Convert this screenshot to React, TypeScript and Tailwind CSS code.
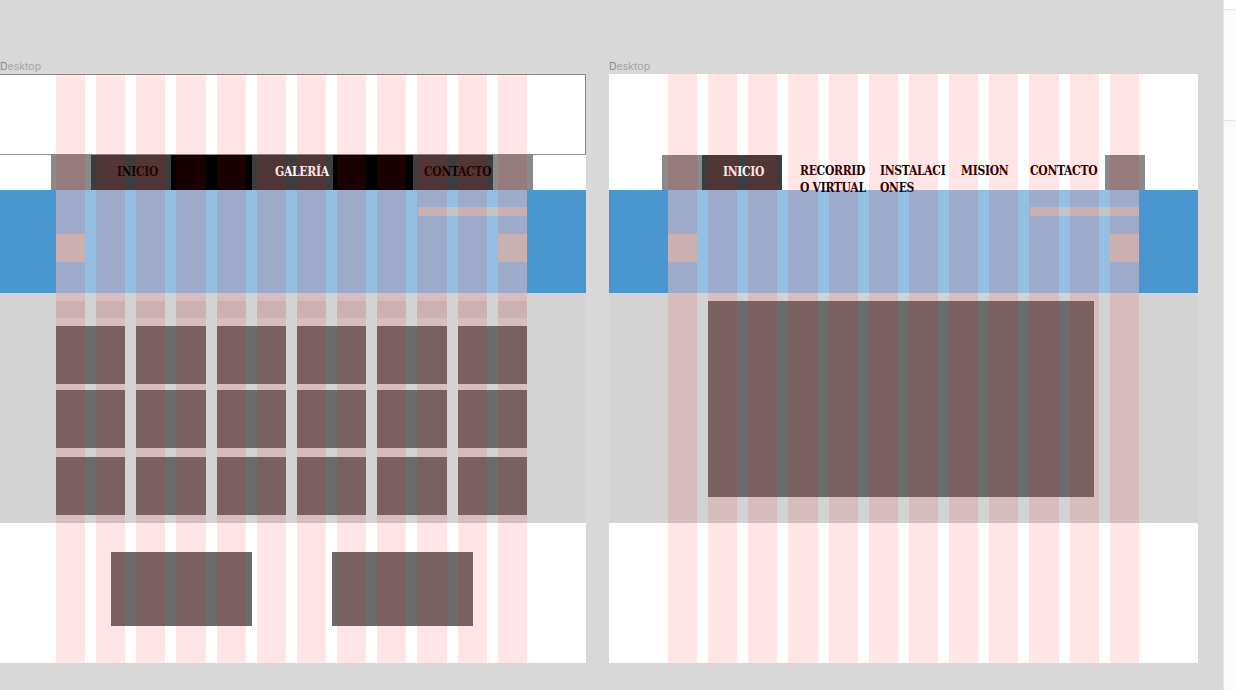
import type { ReactNode } from "react";

const slab = "font-['DejaVu_Serif_Condensed','DejaVu_Serif',serif] font-bold text-[12px] leading-[17px] tracking-[-0.3px] whitespace-nowrap";

function GridOverlay() {
  // 12 column layout grid shown on top of the frame
  return (
    <div className="pointer-events-none absolute inset-0 z-20 grid grid-cols-12 gap-x-[11px] px-[59px]">
      {Array.from({ length: 12 }).map((_, i) => (
        <div key={i} className="h-full bg-[rgba(255,0,0,0.1)]" />
      ))}
    </div>
  );
}

function Frame({ label, children, labelPad = "" }: { label: string; children: ReactNode; labelPad?: string }) {
  return (
    <div className="flex w-[589px] shrink-0 flex-col">
      <div className={`h-[14px] font-['Inter',sans-serif] text-[10.5px] leading-[14px] text-[#a6a6a6] ${labelPad}`}>
        <span className="text-[#8c8c8c]">{label[0]}</span>
        {label.slice(1)}
      </div>
      <div className="relative flex h-[589px] flex-col bg-white">
        {children}
        <GridOverlay />
      </div>
    </div>
  );
}

function Hero() {
  return (
    <div className="h-[103px] bg-[#4a96d0] px-[59px]">
      <div className="flex h-full flex-col bg-[#93bfe3] pt-[17px]">
        <div className="h-[9px] w-[109px] self-end bg-[#c4c4c4]" />
        <div className="mt-[18px] flex justify-between">
          <div className="h-[28px] w-[29px] bg-[#c4c4c4]" />
          <div className="h-[28px] w-[29px] bg-[#c4c4c4]" />
        </div>
      </div>
    </div>
  );
}

function Box({ className = "" }: { className?: string }) {
  return <div className={`bg-[#6b6b6b] ${className}`} />;
}

function GalleryPage() {
  return (
    <>
      <div className="h-[81px] border border-[#8c8c8c] bg-white" />
      <div className={`flex h-[35px] pl-[54px] ${slab}`}>
        <div className="w-[40px] bg-[#8a8a8a]" />
        <div className="flex w-[80px] items-center bg-[#3d3d3d] pl-[26px] text-[#140000]">INICIO</div>
        <div className="w-[81px] bg-black" />
        <div className="flex w-[81px] items-center bg-[#3d3d3d] pl-[23px] text-white">GALERÍA</div>
        <div className="w-[80px] bg-black" />
        <div className="flex w-[80px] items-center bg-[#3d3d3d] pl-[11px] text-[#140000]">CONTACTO</div>
        <div className="w-[40px] bg-[#8a8a8a]" />
      </div>
      <Hero />
      <div className="h-[230px] bg-[#d3d3d3] px-[59px] pt-[8px]">
        <div className="grid h-[17px] grid-cols-12 gap-x-[11px]">
          {Array.from({ length: 12 }).map((_, i) => (
            <div key={i} className="bg-[rgba(0,0,0,0.06)]" />
          ))}
        </div>
        <div className="mt-[8px] grid grid-cols-6 gap-x-[11px]">
          {Array.from({ length: 6 }).map((_, i) => (
            <Box key={`a${i}`} className="h-[58px]" />
          ))}
        </div>
        <div className="mt-[6px] grid grid-cols-6 gap-x-[11px]">
          {Array.from({ length: 6 }).map((_, i) => (
            <Box key={`b${i}`} className="h-[58px]" />
          ))}
        </div>
        <div className="mt-[9px] grid grid-cols-6 gap-x-[11px]">
          {Array.from({ length: 6 }).map((_, i) => (
            <Box key={`c${i}`} className="h-[58px]" />
          ))}
        </div>
      </div>
      <div className="flex h-[140px] bg-white pt-[29px] pl-[114px]">
        <Box className="h-[74px] w-[141px]" />
        <Box className="ml-[80px] h-[74px] w-[141px]" />
      </div>
    </>
  );
}

function HomePage() {
  return (
    <>
      <div className="h-[81px] bg-white" />
      <div className={`relative z-10 flex h-[35px] pl-[53px] ${slab}`}>
        <div className="w-[40px] bg-[#8a8a8a]" />
        <div className="flex w-[80px] items-center bg-[#3d3d3d] pl-[21px] text-white">INICIO</div>
        <div className="w-[80px] pl-[18px] pt-[8px] text-[#140000]">
          RECORRID
          <br />O VIRTUAL
        </div>
        <div className="w-[81px] pl-[18px] pt-[8px] text-[#140000]">
          INSTALACI
          <br />
          ONES
        </div>
        <div className="w-[80px] pl-[18px] pt-[8px] text-[#140000]">MISION</div>
        <div className="w-[82px] pl-[7px] pt-[8px] text-[#140000]">CONTACTO</div>
        <div className="w-[40px] bg-[#8a8a8a]" />
      </div>
      <Hero />
      <div className="h-[230px] bg-[#d3d3d3] pl-[99px] pt-[8px]">
        <Box className="h-[196px] w-[386px]" />
      </div>
      <div className="h-[140px] bg-white" />
    </>
  );
}

export default function App() {
  return (
    <div className="flex h-[690px] w-full overflow-hidden bg-[#d8d8d8]">
      <div className="flex flex-1 gap-[23px] pt-[60px]">
        <div className="-ml-[3px] flex">
          <Frame label="Desktop" labelPad="pl-[3px]">
            <GalleryPage />
          </Frame>
        </div>
        <Frame label="Desktop">
          <HomePage />
        </Frame>
      </div>
      <div className="flex w-[13px] shrink-0 flex-col border-l border-[#e4e4e4] bg-[#fafafa]">
        <div className="h-[10px] border-b border-[#e6e6e6] bg-white" />
        <div className="h-[111px] border-b border-[#e6e6e6]" />
      </div>
    </div>
  );
}
